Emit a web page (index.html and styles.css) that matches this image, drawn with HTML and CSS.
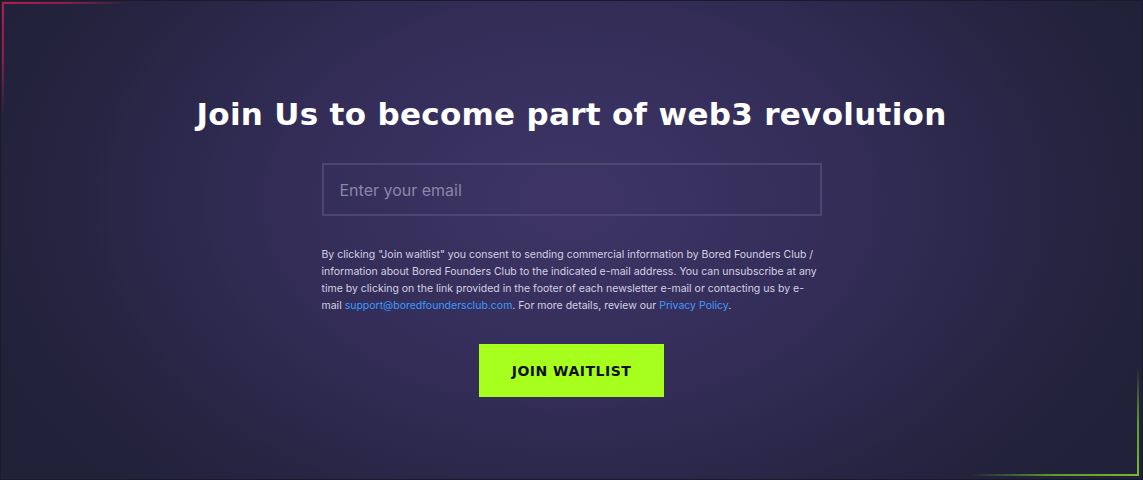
FILE: index.html
```html
<!DOCTYPE html>
<html>
<head>
    <title>Join waitlist</title>
    <link rel="stylesheet" href="styles.css">
</head>
<body>

<div class="frame">
    <div class="corner corner-top"></div>
    <div class="corner corner-bottom"></div>

    <div class="waitlist">
        <h1 class="waitlist-title">Join Us to become part of web3 revolution</h1>
        <form class="waitlist-form">
            <input type="email" class="email-input" placeholder="Enter your email">
            <p class="consent">
                By clicking "Join waitlist" you consent to sending commercial information by Bored Founders Club /
                information about Bored Founders Club to the indicated e-mail address. You can unsubscribe at any
                time by clicking on the link provided in the footer of each newsletter e-mail or contacting us by e-mail
                <a href="#">support@boredfoundersclub.com</a>. For more details, review our <a href="#">Privacy Policy</a>.
            </p>
            <button type="button" class="join-btn">JOIN WAITLIST</button>
        </form>
    </div>
</div>

</body>
</html>
```

FILE: styles.css
```css
html, body {
    margin: 0;
    height: 100%;
}
body {
    font-family: Inter, "Liberation Sans", Arial, sans-serif;
    background-color: #1e1e33;
}
.frame {
    position: relative;
    box-sizing: border-box;
    height: 480px;
    border: 1px solid #1a1a2a;
    background: radial-gradient(ellipse 620px 420px at 570px 200px, #3e3566 0%, #332d58 45%, #25233f 85%, #22213a 100%);
    display: flex;
    justify-content: center;
}
.corner {
    position: absolute;
    pointer-events: none;
    background-repeat: no-repeat;
}
.corner-top {
    top: 1px;
    left: 1px;
    width: 130px;
    height: 115px;
    background-image:
        linear-gradient(to right, #b31c4d 0%, #8a1e4a 50%, rgba(80, 30, 70, 0) 100%),
        linear-gradient(to bottom, #b31c4d 0%, #8a1e4a 50%, rgba(80, 30, 70, 0) 100%);
    background-size: 100% 2px, 2px 100%;
    background-position: top left, top left;
}
.corner-bottom {
    right: 3px;
    bottom: 3px;
    width: 170px;
    height: 110px;
    background-image:
        linear-gradient(to left, #78b82c 0%, #5e9a2a 50%, rgba(40, 70, 40, 0) 100%),
        linear-gradient(to top, #78b82c 0%, #5e9a2a 50%, rgba(40, 70, 40, 0) 100%);
    background-size: 100% 2px, 2px 100%;
    background-position: bottom right, bottom right;
}
.waitlist {
    width: 500px;
    display: flex;
    flex-direction: column;
    align-items: center;
}
.waitlist-title {
    margin: 94px 0 0;
    white-space: nowrap;
    color: #fff;
    font-family: "DejaVu Sans", sans-serif;
    font-size: 31px;
    font-weight: bold;
    line-height: 38px;
    letter-spacing: 0.3px;
}
.waitlist-form {
    width: 500px;
    margin-top: 30px;
    display: flex;
    flex-direction: column;
    align-items: center;
}
.email-input {
    width: 100%;
    height: 53px;
    box-sizing: border-box;
    padding: 0 16px;
    background: transparent;
    border: 2px solid #4c4671;
    color: #fff;
    font-family: Inter, "Liberation Sans", sans-serif;
    font-size: 16px;
    outline: none;
}
.email-input::placeholder {
    color: #8b86a8;
}
.consent {
    margin: 30px 0 0;
    color: #d4d1e2;
    font-size: 10.5px;
    line-height: 17px;
}
.consent a {
    color: #3d9bff;
    text-decoration: none;
}
.join-btn {
    margin-top: 30px;
    width: 185px;
    height: 53px;
    background-color: #a6ff1c;
    color: #111;
    border: none;
    font-family: "DejaVu Sans", sans-serif;
    font-size: 14px;
    font-weight: bold;
    letter-spacing: 0.5px;
    cursor: pointer;
}
```
